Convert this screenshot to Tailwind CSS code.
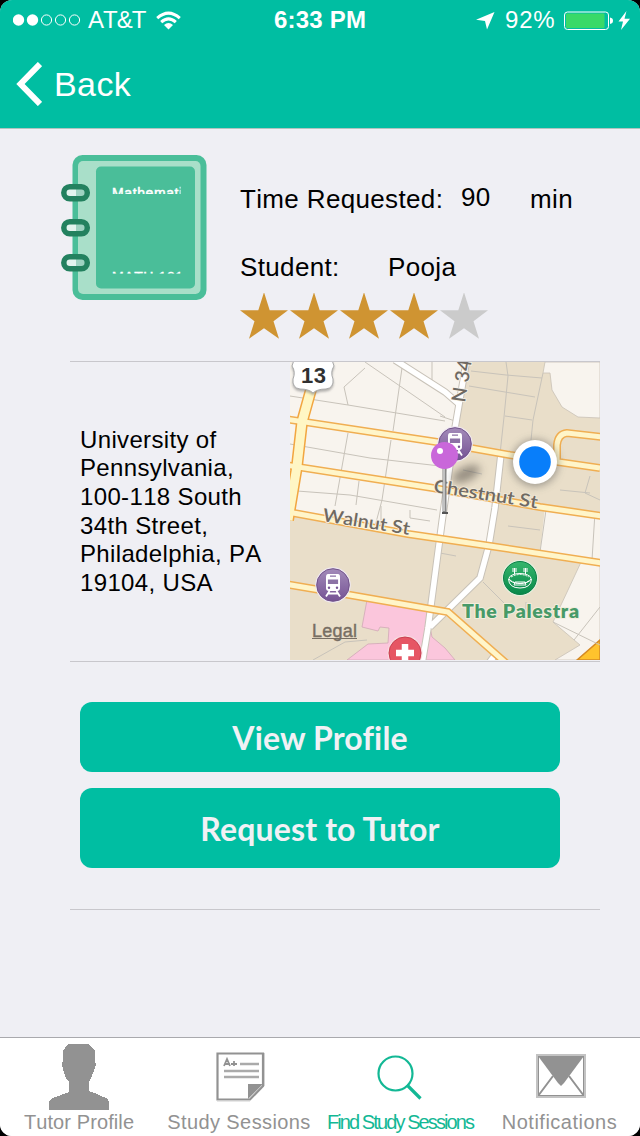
<!DOCTYPE html>
<html lang="en">
<head>
<meta charset="utf-8">
<title>Find Study Sessions</title>
<script src="https://cdn.jsdelivr.net/npm/@tailwindcss/browser@4"></script>
</head>
<body class="bg-black">
<div class="relative flex h-[1136px] w-[640px] flex-col overflow-hidden rounded-[12px] bg-[#efeff4] font-['Liberation_Sans',Arial,sans-serif] text-black [font-kerning:none]">

  <header class="h-[129px] shrink-0 border-b border-[#b0c4c0] bg-[#00bea2] text-white">
    <div class="flex h-10 items-center leading-10">
      <div class="flex w-[274px] items-center pl-[13px]">
        <svg class="mr-[7px] h-3 w-[68px]" viewBox="0 0 68 12" fill="none" stroke="#fff"><g fill="#fff" stroke="none"><circle cx="5.5" cy="6" r="5.7"/><circle cx="19.5" cy="6" r="5.7"/></g><circle cx="33.5" cy="6" r="5.1"/><circle cx="47.5" cy="6" r="5.1"/><circle cx="61.5" cy="6" r="5.1"/></svg>
        <span class="w-[57px] text-2xl leading-10 tracking-[-1px]">AT&amp;T</span>
        <svg class="ml-[11px] h-[19px] w-[25px]" viewBox="0 0 25 19" fill="none" stroke="#fff" stroke-width="3"><path d="M1.2 7.2Q12.5-3 23.8 7.2M5.2 11.2Q12.5 4.6 19.8 11.2"/><path d="M8 14Q12.500 10 17 14L12.500 18.500Z" fill="#fff" stroke="none"/></svg>
      </div>
      <span class="w-[201px] text-2xl leading-10 font-bold tracking-[0.2px]">6:33 PM</span>
      <svg class="h-[19px] w-5" viewBox="0 0 20 19" fill="#fff"><path d="M19.500 1L12 18.500L10 10L1 8.800Z"/></svg>
      <span class="ml-[10px] w-[51px] text-2xl leading-10 tracking-[0.8px]">92%</span>
      <svg class="ml-[7px] h-[21px] w-[70px]" viewBox="0 0 70 21"><rect x="1.500" y="2" width="44" height="17.500" rx="3" fill="none" stroke="#fff"/><rect x="3" y="3.500" width="38.500" height="14.500" rx="1" fill="#39d968"/><path d="M47 7.500Q50 8 50 10.700T47 14Z" fill="#fff"/><path d="M63.500 1L55.500 11.500H60L58 20L67 8.700H61.500Z" fill="#fff"/></svg>
    </div>
    <div class="flex h-[88px] items-center pl-4">
      <svg class="mr-3 h-11 w-[26px]" viewBox="0 0 26 44" fill="none" stroke="#fff" stroke-width="6"><path d="M24 2L4.500 22L24 42"/></svg>
      <span class="text-[34px] leading-[88px] tracking-[0.4px]">Back</span>
    </div>
  </header>

  <main class="flex grow flex-col">
    <section class="ml-[70px] flex h-[233px] w-[530px] border-b border-[#c8c7cc]">
      <svg class="-ml-[10px] mt-[25px] h-[148px] w-[150px] shrink-0" viewBox="60 154 150 148">
        <rect x="72.500" y="155" width="134" height="145" rx="10" fill="#4abe99"/>
        <rect x="78" y="161" width="122.500" height="133" rx="5" fill="#a9dfc9"/>
        <rect x="96" y="166.500" width="99" height="122" rx="5" fill="#4abe99"/>
        <defs>
          <clipPath id="title"><rect x="110" y="180" width="70.500" height="14"/></clipPath>
          <clipPath id="code"><rect x="110" y="271" width="70.500" height="2.600"/></clipPath>
          <linearGradient id="hole"><stop offset=".5" stop-color="#e3f3ee"/><stop offset=".5" stop-color="#9ed2c1"/></linearGradient>
        </defs>
        <g fill="#fff" stroke="#fff" stroke-width=".5" font-size="14" letter-spacing=".6"><text x="112" y="197.500" clip-path="url(#title)">Mathematics</text><text x="112" y="281.500" clip-path="url(#code)">MATH 101</text></g>
        <g fill="url(#hole)" stroke="#23815f" stroke-width="5.500"><rect x="63.800" y="186.700" width="23.500" height="12" rx="6"/><rect x="63.800" y="221.700" width="23.500" height="12" rx="6"/><rect x="63.800" y="256.700" width="23.500" height="12" rx="6"/></g>
      </svg>
      <div class="ml-[30px] mt-[50px] text-[26px] leading-10 tracking-[0.35px] whitespace-nowrap">
        <div class="flex h-[68px]"><span class="w-[221px]">Time Requested:</span><span class="-mt-0.5 w-[69px]">90</span><span>min</span></div>
        <div class="flex h-[46px]"><span class="w-[148px]">Student:</span><span>Pooja</span></div>
        <svg class="h-[50px] w-[250px]" viewBox="0 0 250 50" fill="#cf9432">
          <defs><path id="star" d="M24 -1L29.700 17H48L33.500 28L39 45.500L24 35L9 45.500L14.500 28L0 17H18.300Z"/></defs>
          <use href="#star" y="0.200"/><use href="#star" x="50" y="0.200"/><use href="#star" x="100" y="0.200"/><use href="#star" x="150" y="0.200"/><use href="#star" x="200" y="0.200" fill="#cbcbcb"/>
        </svg>
      </div>
    </section>

    <section class="ml-[70px] flex h-[300px] w-[530px] items-center border-b border-[#c8c7cc]">
      <p class="w-[220px] pl-[10px] text-2xl leading-[28.600px] tracking-[0.35px] whitespace-nowrap">University of<br>Pennsylvania,<br>100-118 South<br>34th Street,<br>Philadelphia, PA<br>19104, USA</p>
      <svg class="h-[298px] w-[310px] self-start" viewBox="290 362 310 298" fill="none">
        <defs>
          <linearGradient id="purple" x2="0" y2="1"><stop stop-color="#a38bb9"/><stop offset="1" stop-color="#755294"/></linearGradient>
          <linearGradient id="green" x2="0" y2="1"><stop stop-color="#35b66c"/><stop offset="1" stop-color="#08894a"/></linearGradient>
          <filter id="soft" x="-50%" y="-50%" width="200%" height="200%"><feGaussianBlur stdDeviation="4"/></filter>
          <g id="train"><circle r="17.800" fill="#eee7f0"/><circle r="16.300" fill="url(#purple)" stroke="#71528a"/><path d="M-5-11H5Q7-11 7-8V3Q7 6 4 6H-4Q-7 6-7 3V-8Q-7-11-5-11Z" fill="#fff"/><path d="M-3-8.800H3M-4.500-5H4.500V-1.500H-4.500Z" fill="#8c72a5" stroke="#8c72a5" stroke-width="1.200"/><circle cx="-4" cy="2.800" r="1.200" fill="#765594"/><circle cx="4" cy="2.800" r="1.200" fill="#765594"/><path d="M-3.500 6L-7 11.500M3.500 6L7 11.500M-5 8.500H5" stroke="#fff" stroke-width="1.800"/></g>
          <path id="roads" d="M285 419L437 442L510 455L600 468M285 465L433 488L540 507L602 516M285 511.500L408 534L490 546L602 563M285 584L350 595L448 612L506 663M557 461V445Q558 434 567 433L602 437"/>
          <path id="avenue" d="M312 386L302 422L297 466L288 520"/>
          <path id="streets" d="M395 360L445 392L460 405M467 358L455 428L442 522L428 628L422 664M501 454L495 508L489 545L480 578L430 627M489 663L495 655"/>
        </defs>
        <path d="M290 362H600V660H290Z" fill="#f8f4ee"/>
        <g fill="#e9dec9">
          <path d="M466 362H600V516L540 507L449 490L455 428Z"/>
          <path d="M493 500L545 508L540 552L489 545Z"/>
          <path d="M290 513L408 534L490 546L600 562V660H290Z"/>
        </g>
        <path d="M545 362L543 373H550L552 390L562 407L578 417L600 418V362ZM582 560L568 590L553 622L580 645L555 660H600V562Z" fill="#f8f4ee" stroke="#c9c2b6" stroke-width=".8"/>
        <path d="M367 600L362 627L378 631L380 627L389 628L388 643L368 644L347 660H455L445 648L432 637L427 611Z" fill="#fbc6dc" stroke="#d1a8b6" stroke-width=".8"/>
        <path d="M577 660L600 640V660Z" fill="#ffc32d" stroke="#d58a24" stroke-width="1.500"/>
        <path d="M290 396L348 405L445 421M365 362L445 417M365 368L344 387L348 405M402 368L393 431M432 362V381M290 444L370 458L440 466M348 433L335 506M391 440L382 500L374 530M297 491L350 495L437 510M359 481L356 505M381 506V526M410 510V518L430 521M440 416L455 421M471 371L506 375L542 378M469 386L505 392L535 397M506 362L508 376L504 417L500 454M543 373L533 420L530 450M505 416L532 420M463 470L482 474M546 510L540 552M595 512L592 560L582 560M508 526L540 530M440 553L456 556M483 582L506 605M526 602V612M553 622L600 645M574 640L600 607M313 660L345 642L367 640M590 476L585 493L600 500M560 490L590 493" stroke="#c8c3ba"/>
        <use href="#streets" stroke="#c8c2b8" stroke-width="7.500"/><use href="#streets" stroke="#fff" stroke-width="5.500"/>
        <use href="#roads" stroke="#f0ae52" stroke-width="8"/><use href="#avenue" stroke="#f2a640" stroke-width="12"/>
        <use href="#roads" stroke="#fff5c9" stroke-width="5"/><use href="#avenue" stroke="#fff6c4" stroke-width="9"/>

        <g filter="drop-shadow(0 2px 1px #7778)"><path d="M294 360H332L334 366Q330 372 333 379Q334 388 326 389Q317 389 313 393Q309 389 300 389Q292 388 293 379Q296 372 292 366Z" fill="#fff" stroke="#aaa"/></g>
        <text x="301" y="383" font-size="22" font-weight="700" fill="#303030" textLength="25">13</text>

        <g font-family="Lato, sans-serif" fill="#6f6962" stroke="#f8f3e9" stroke-width="1.500" paint-order="stroke" font-size="18" font-weight="600">
          <text transform="translate(465 403) rotate(-81)" textLength="43" font-size="19.500">N 34</text>
          <text transform="translate(322 521) rotate(9)" textLength="88" lengthAdjust="spacingAndGlyphs">Walnut St</text>
        </g>
        <use href="#train" x="455" y="444"/>
        <use href="#train" x="333" y="585"/>
        <ellipse cx="466" cy="474" rx="15" ry="7" fill="#45403a" opacity=".5" filter="url(#soft)" transform="rotate(-25 466 474)"/>
        <text transform="translate(433 492) rotate(9)" font-family="Lato, sans-serif" fill="#6f6962" stroke="#f3eadb" stroke-width="1.500" paint-order="stroke" font-size="18" font-weight="600" textLength="105" lengthAdjust="spacingAndGlyphs">Chestnut St</text>
        <path d="M444.500 468V512" stroke="#888" stroke-width="4"/><path d="M444 468V511" stroke="#d4d4d4" stroke-width="1.500"/><path d="M442 513H448" stroke="#555" stroke-width="2"/>
        <circle cx="444.500" cy="455.500" r="13.500" fill="#c967da"/><circle cx="440" cy="451" r="3" fill="#fff"/>
        <circle cx="535" cy="463" r="23" fill="#555" opacity=".55" filter="url(#soft)"/><circle cx="535" cy="462" r="22" fill="#fff"/><circle cx="535" cy="462" r="15.800" fill="#087efa"/>

        <circle cx="520" cy="578" r="18" fill="#e4f1df"/><circle cx="520" cy="578" r="16.500" fill="url(#green)" stroke="#0b8047"/>
        <g stroke="#fff"><ellipse cx="520" cy="578.500" rx="11" ry="5"/><path d="M508.500 579Q509 588 520 588T531.500 579"/><path d="M515 582H525L526 585H514ZM514.500 568V574M525.500 568V574M512 569H517M523 569H528M512 571H517M523 571H528"/><path d="M510 580Q520 587 530 580" stroke-dasharray="2 1"/><path d="M511 577Q520 572 529 577" stroke-dasharray="2 1"/></g>
        <text x="462" y="618" font-family="Lato, sans-serif" font-size="19.500" font-weight="800" fill="#479a68" stroke="#f2eddc" stroke-width="2" paint-order="stroke" textLength="117">The Palestra</text>
        <circle cx="405" cy="653" r="17.500" fill="#f8dce0"/><circle cx="405" cy="653" r="16" fill="#e65664" stroke="#c93f52"/><path d="M405 644V662M396 653H414" stroke="#fff" stroke-width="6.500"/>
        <text x="312" y="637" font-size="18" fill="#776e63" stroke="#776e63" stroke-width=".4" textLength="45">Legal</text><path d="M312 638.500H357" stroke="#776e63"/>
      </svg>
    </section>

    <section class="ml-[70px] flex h-[248px] w-[530px] flex-col gap-4 border-b border-[#c8c7cc] pl-[10px] pt-10 font-[Lato,sans-serif] text-[32px] font-bold text-[#f1f1f5] [font-kerning:normal]">
      <button class="h-[70px] w-[480px] rounded-[12px] bg-[#00bea2] pt-0.5 tracking-[0.15px]">View Profile</button>
      <button class="h-20 w-[480px] rounded-[12px] bg-[#00bea2] pt-0.5 tracking-[0.15px]">Request to Tutor</button>
    </section>
  </main>

  <nav class="flex h-[99px] shrink-0 border-t border-[#a9a9ad] bg-white text-xl leading-6 whitespace-nowrap text-[#929292]">
    <div class="flex w-[158px] flex-col items-center">
      <svg class="mt-1.5 h-[67px] w-[62px]" viewBox="0 0 62 67" fill="#929292" shape-rendering="crispEdges"><path d="M20 0H41L47 7V17L48 20L46 27L43 34L41 38V47L49 50L60 55L61 58V66H1V57L4 54L13 51L21 48V38L18 34L15 26L14 20L15 17V7Z"/></svg>
      <span class="-mt-px tracking-[0.100px]">Tutor Profile</span>
    </div>
    <div class="flex w-[162px] flex-col items-center">
      <svg class="mt-3.5 ml-[3px] h-[50px] w-[50px]" viewBox="0 0 50 50" fill="none" stroke="#929292"><path d="M1.500 1.500H47V34L34 47.500H1.500Z" stroke-width="2.200"/><path d="M48.500 1V34M1 49H34" stroke="#d2d2d2"/><path d="M32 47V32H47Z" fill="#929292" stroke="none"/><path d="M24 12H43M8 19H43M8 25H43" stroke="#aaa" stroke-width="2.500"/><path d="M8 14L11 7L14 14M9 12H14M15 12H21M18 9V14" stroke-width="1.800"/></svg>
      <span class="mt-2 tracking-[0.400px]">Study Sessions</span>
    </div>
    <div class="flex w-[160px] flex-col items-center text-[#13b895]">
      <svg class="mt-[17px] h-[46px] w-[46px]" viewBox="0 0 46 46" fill="none" stroke="currentColor"><circle cx="18.500" cy="18.500" r="17" stroke-width="2.200"/><path d="M30 30L43.500 43.500" stroke-width="3.200"/></svg>
      <span class="mt-[9px] tracking-[-1.900px]">Find Study Sessions</span>
    </div>
    <div class="flex w-[160px] flex-col items-center">
      <svg class="ml-[2px] mt-4 h-11 w-[50px]" viewBox="0 0 50 44" fill="none" stroke="#929292"><path d="M2 2H48V42H2ZM2 42L17 22M48 42L33 22" stroke-width="2"/><path d="M1 1H49V43H1Z" stroke="#c3c3c3" stroke-width="2"/><path d="M2 2H48L28 29L25 32L22 29Z" fill="#929292" stroke="none"/></svg>
      <span class="mt-3 -ml-px tracking-[0.500px]">Notifications</span>
    </div>
  </nav>
</div>
</body>
</html>
